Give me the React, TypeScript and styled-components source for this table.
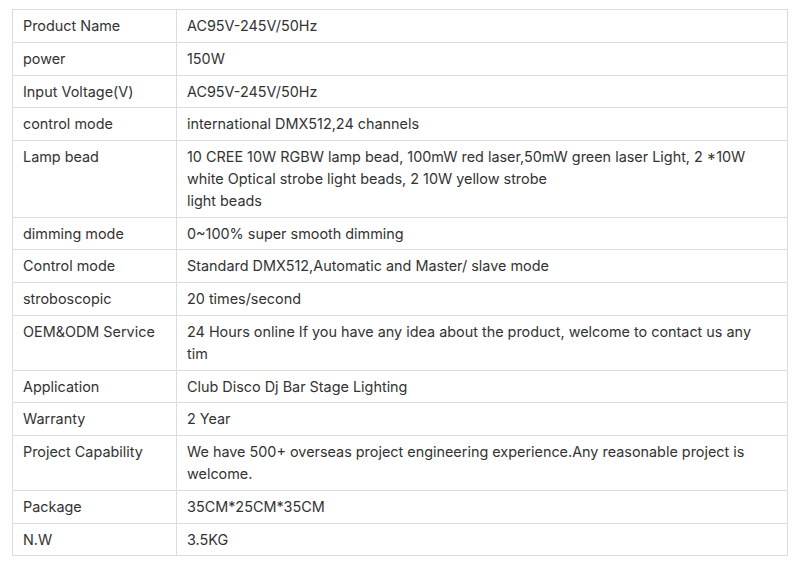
import React from "react";
import styled, { createGlobalStyle } from "styled-components";

const Global = createGlobalStyle`
  html, body { margin: 0; padding: 0; background: #ffffff; }
  body { font-family: Inter, "Noto Sans", "Liberation Sans", sans-serif; }
`;

const Page = styled.div`
  padding: 9px 12px 0 12px;
`;

const Table = styled.table`
  width: 776px;
  border-collapse: collapse;
  table-layout: fixed;
  border: 1px solid #dcdcdc;
`;

const Row = styled.tr``;

const Cell = styled.td<{ $label?: boolean }>`
  box-sizing: border-box;
  width: ${(p) => (p.$label ? "164px" : "auto")};
  border: 1px solid #dcdcdc;
  padding: 5px ${(p) => (p.$label ? "10px" : "22px")} 5px 10px;
  font-size: 14.4px;
  line-height: 21.8px;
  color: #333333;
  vertical-align: top;
  text-align: left;
`;

type Spec = { label: string; value: React.ReactNode };

const specs: Spec[] = [
  { label: "Product Name", value: "AC95V-245V/50Hz" },
  { label: "power", value: "150W" },
  { label: "Input Voltage(V)", value: "AC95V-245V/50Hz" },
  { label: "control mode", value: "international DMX512,24 channels" },
  {
    label: "Lamp bead",
    value: (
      <>
        10 CREE 10W RGBW lamp bead, 100mW red laser,50mW green laser Light, 2 *10W white Optical strobe light beads, 2 10W yellow strobe
        <br />
        light beads
      </>
    ),
  },
  { label: "dimming mode", value: "0~100% super smooth dimming" },
  { label: "Control mode", value: "Standard DMX512,Automatic and Master/ slave mode" },
  { label: "stroboscopic", value: "20 times/second" },
  {
    label: "OEM&ODM Service",
    value: "24 Hours online If you have any idea about the product, welcome to contact us any tim",
  },
  { label: "Application", value: "Club Disco Dj Bar Stage Lighting" },
  { label: "Warranty", value: "2 Year" },
  {
    label: "Project Capability",
    value: "We have 500+ overseas project engineering experience.Any reasonable project is welcome.",
  },
  { label: "Package", value: "35CM*25CM*35CM" },
  { label: "N.W", value: "3.5KG" },
];

export default function App() {
  return (
    <>
      <Global />
      <Page>
        <Table>
          <tbody>
            {specs.map((s) => (
              <Row key={s.label}>
                <Cell $label>{s.label}</Cell>
                <Cell>{s.value}</Cell>
              </Row>
            ))}
          </tbody>
        </Table>
      </Page>
    </>
  );
}
